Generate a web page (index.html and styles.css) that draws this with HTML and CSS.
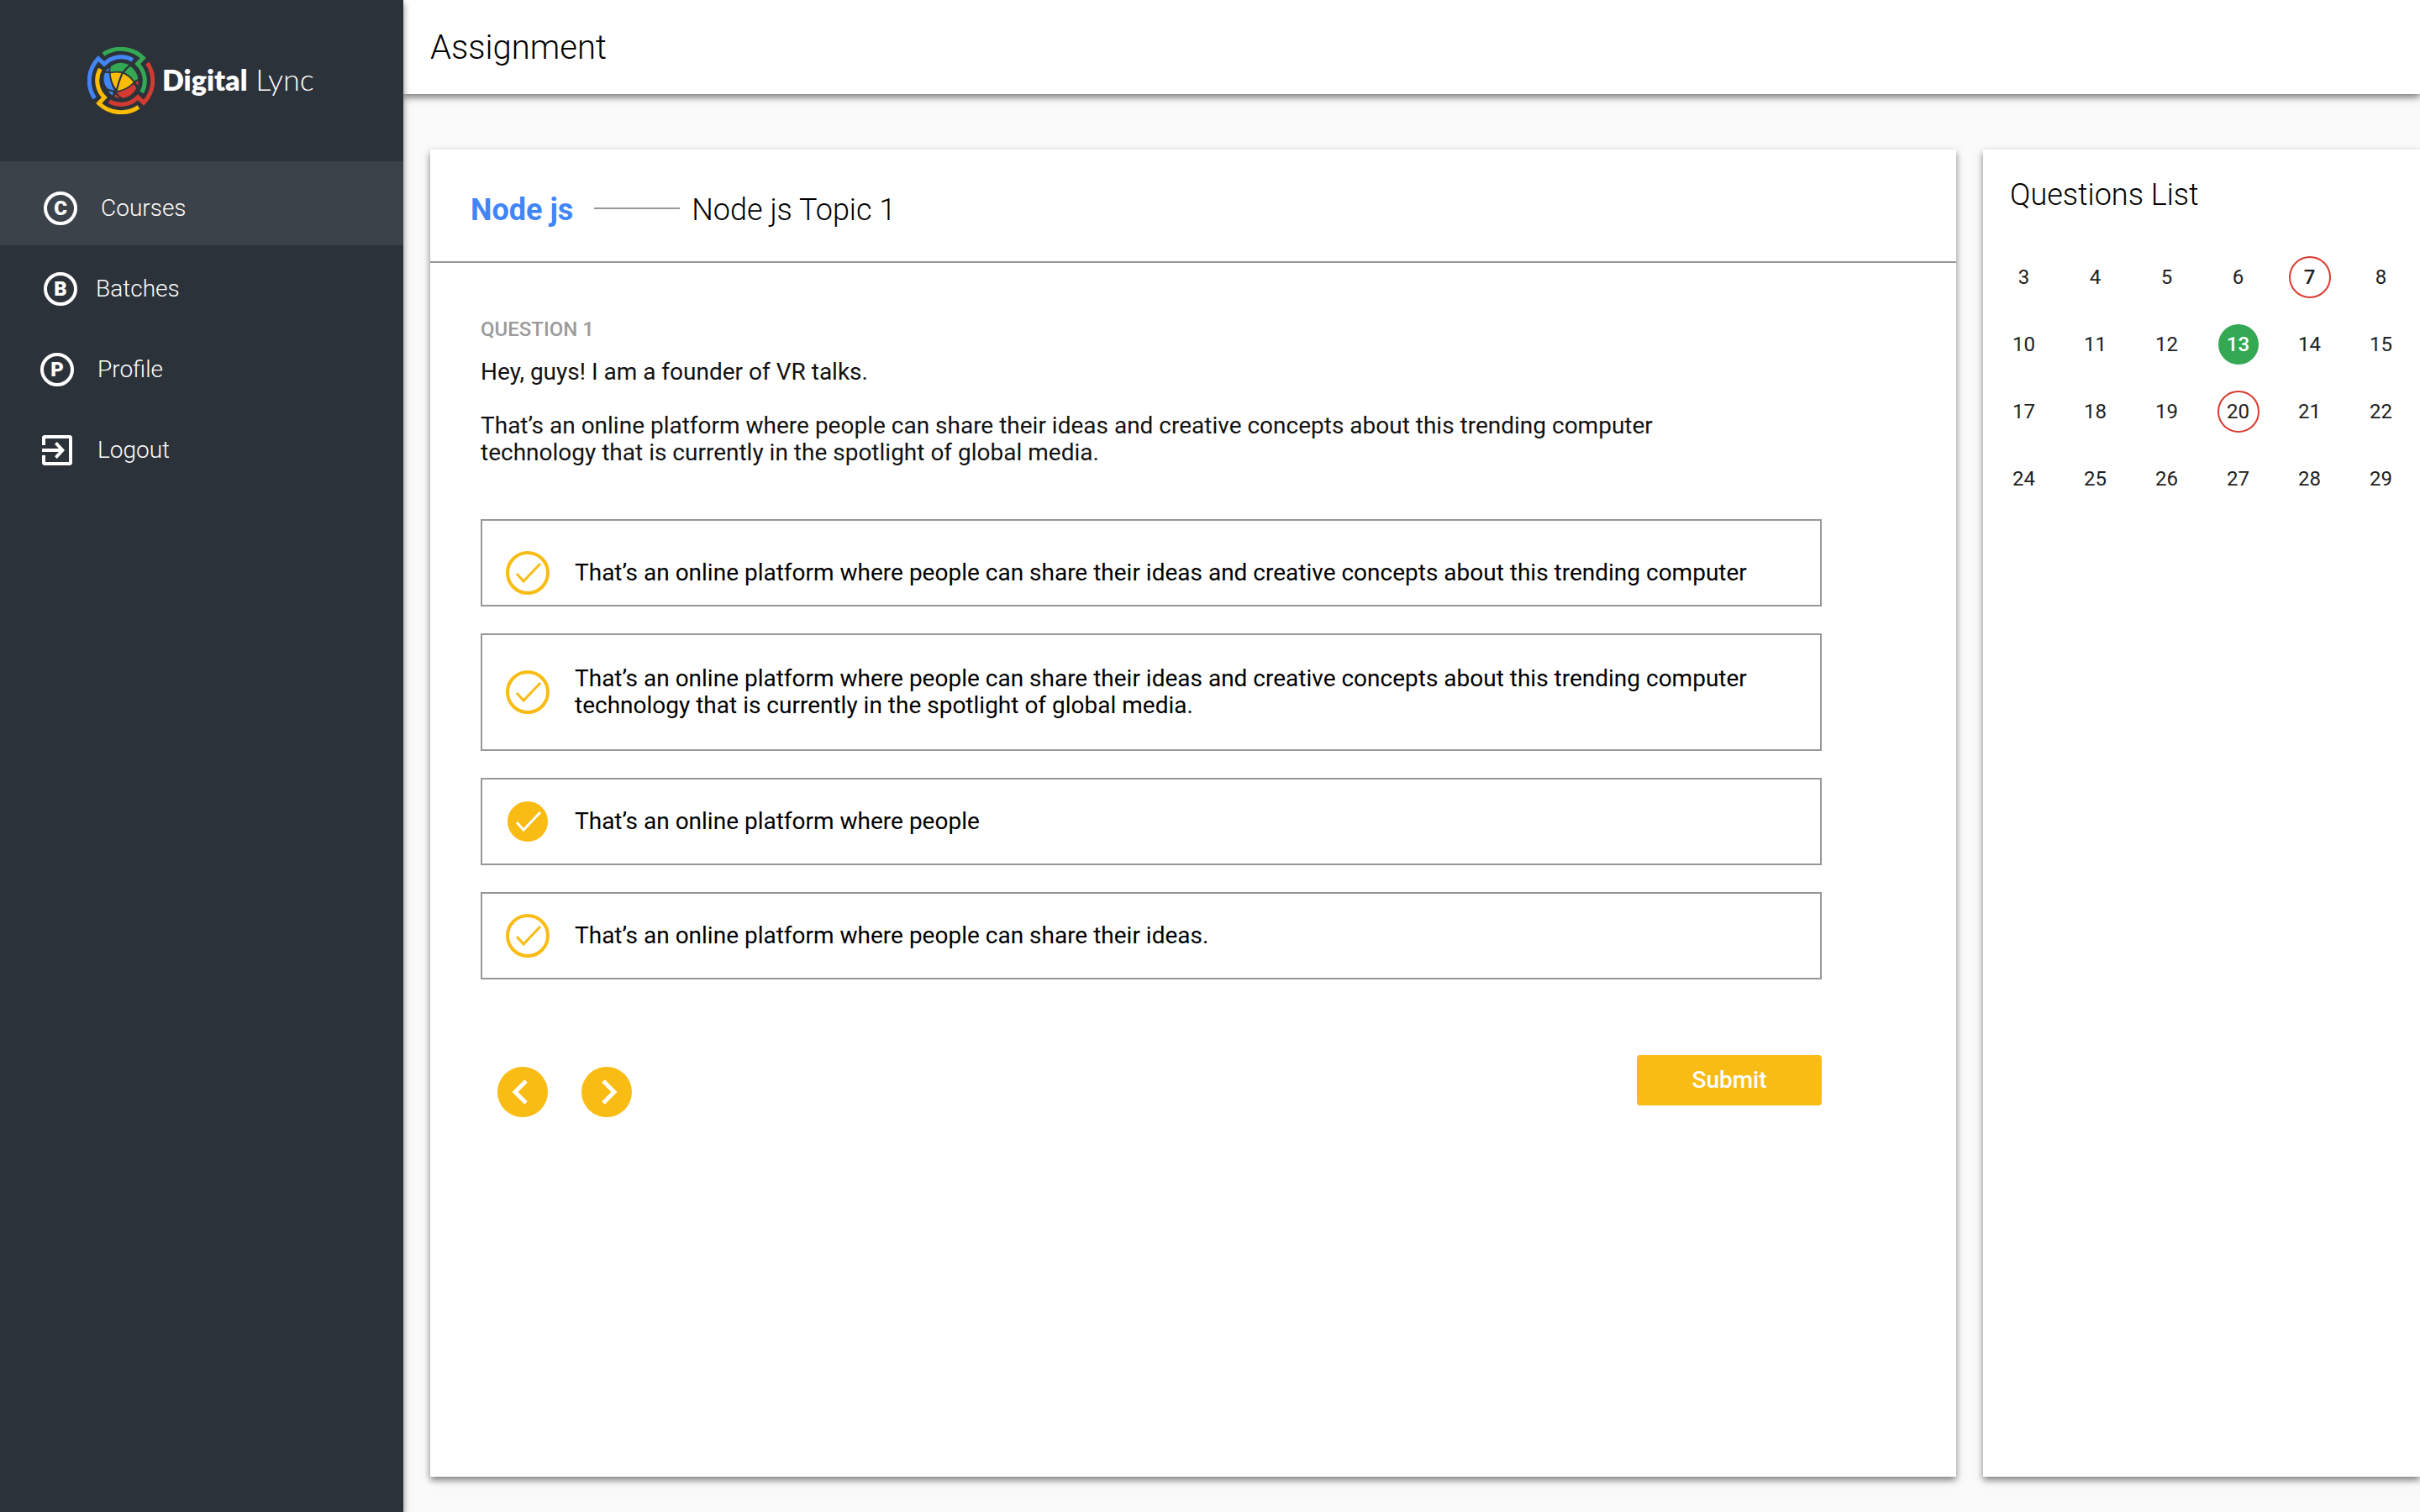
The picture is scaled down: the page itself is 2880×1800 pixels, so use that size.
FILE: index.html
```html
<!DOCTYPE html>
<html lang="en">
<head>
<meta charset="utf-8">
<title>Assignment – Digital Lync</title>
<link rel="stylesheet" href="styles.css">
</head>
<body>
<div class="app">
  <aside class="sidebar">
    <a class="brand" href="#">
      <svg class="brand-mark" viewBox="-120 -120 240 240" aria-hidden="true">
        <g fill="none" stroke-width="15">
          <path stroke="#34a853" d="M-63-94A113 113 0 0 1 79-81L59-60A84 84 0 0 1 74 42"/>
          <path stroke="#d33b30" transform="rotate(90)" d="M-63-94A113 113 0 0 1 79-81L59-60A84 84 0 0 1 74 42"/>
          <path stroke="#fbbc05" transform="rotate(180)" d="M-63-94A113 113 0 0 1 79-81L59-60A84 84 0 0 1 74 42"/>
          <path stroke="#4285f4" transform="rotate(270)" d="M-63-94A113 113 0 0 1 79-81L59-60A84 84 0 0 1 74 42"/>
        </g>
        <path fill="#34a853" d="M-36-51Q-4-74 29-56Q14-46 6-32Q-16-36-37-31Q-40-42-36-51Z"/>
        <path fill="#34a853" d="M12-29Q20-42 34-51Q57-34 61-6Q54-2 47 1Q34-18 12-29Z"/>
        <path fill="#4285f4" d="M-55-35L-43-46Q-44-40-43-34Z"/>
        <path fill="#4285f4" d="M-57-28L-42-26Q-40 8-24 35Q-38 34-49 28Q-70 0-57-28Z"/>
        <path fill="#4285f4" d="M-45 37L-27 41L-31 53Q-40 47-45 37Z"/>
        <path fill="#fbbc05" d="M-37-26Q-16-30 1-27Q-10 0-18 29Q-35 4-37-26Z"/>
        <path fill="#fbbc05" d="M7-25Q31-15 44 6Q20 30-13 36Q-5 4 7-25Z"/>
        <path fill="#d33b30" d="M-16 43Q22 34 44 13Q52 20 55 28Q40 56 8 63Q-8 56-16 43Z"/>
        <path fill="#d33b30" d="M52 6L62 1Q63 10 60 18Z"/>
        <path fill="#d33b30" d="M-20 49L-4 62Q-14 62-24 58Z"/>
      </svg>
      <span class="brand-name"><b>Digital</b> Lync</span>
    </a>
    <nav class="menu">
      <a class="menu-item active" href="#"><span class="badge">C</span><span class="menu-text">Courses</span></a>
      <a class="menu-item" href="#"><span class="badge">B</span><span class="menu-text">Batches</span></a>
      <a class="menu-item narrow" href="#"><span class="badge">P</span><span class="menu-text">Profile</span></a>
      <a class="menu-item narrow" href="#">
        <svg class="menu-icon" viewBox="1 1 20 20" aria-hidden="true"><path fill="#fff" d="M9.500 14.600 10.900 16l4.600-5-4.600-5-1.400 1.400L12 10H2v2h10zM18.500 2h-15C2.670 2 2 2.670 2 3.500V8h2V4h14v14H4v-4H2v4.500c0 .83.67 1.500 1.500 1.500h15c.83 0 1.500-.67 1.500-1.500v-15c0-.83-.67-1.500-1.500-1.500z"/></svg>
        <span class="menu-text">Logout</span>
      </a>
    </nav>
  </aside>

  <div class="content">
    <header class="topbar"><h1>Assignment</h1></header>
    <main class="panels">
      <section class="card quiz">
        <div class="quiz-head">
          <h2 class="course">Node js</h2>
          <span class="rule"></span>
          <span class="topic">Node js Topic 1</span>
        </div>
        <form class="quiz-body">
          <h3 class="label">QUESTION 1</h3>
          <div class="question" id="question">
            <p>Hey, guys! I am a founder of VR talks.</p>
            <p>That’s an online platform where people can share their ideas and creative concepts about this trending computer<br>technology that is currently in the spotlight of global media.</p>
          </div>
          <div class="options" role="radiogroup" aria-labelledby="question">
            <label class="option low"><input class="tick" type="radio" name="answer"><span>That’s an online platform where people can share their ideas and creative concepts about this trending computer</span></label>
            <label class="option tall"><input class="tick" type="radio" name="answer"><span>That’s an online platform where people can share their ideas and creative concepts about this trending computer<br>technology that is currently in the spotlight of global media.</span></label>
            <label class="option"><input class="tick" type="radio" name="answer" checked><span>That’s an online platform where people</span></label>
            <label class="option"><input class="tick" type="radio" name="answer"><span>That’s an online platform where people can share their ideas.</span></label>
          </div>
          <div class="actions">
            <div class="pager">
              <button class="round" type="button" aria-label="Previous question"><svg viewBox="0 0 60 60"><path d="M34 17 21 30l13 13"/></svg></button>
              <button class="round" type="button" aria-label="Next question"><svg viewBox="0 0 60 60"><path d="M26 17l13 13-13 13"/></svg></button>
            </div>
            <button class="submit" type="button">Submit</button>
          </div>
        </form>
      </section>

      <section class="card list">
        <h2>Questions List</h2>
        <div class="numbers">
          <button type="button">3</button><button type="button">4</button><button type="button">5</button><button type="button">6</button><button type="button" class="ring strong">7</button><button type="button">8</button>
          <button type="button">10</button><button type="button">11</button><button type="button">12</button><button type="button" class="done strong">13</button><button type="button">14</button><button type="button">15</button>
          <button type="button">17</button><button type="button">18</button><button type="button">19</button><button type="button" class="ring">20</button><button type="button">21</button><button type="button">22</button>
          <button type="button">24</button><button type="button">25</button><button type="button">26</button><button type="button">27</button><button type="button">28</button><button type="button">29</button>
        </div>
      </section>
    </main>
  </div>
</div>
</body>
</html>
```
FILE: styles.css
```css
:root {
  --dark: #2c323a;
  --dark-active: #3c4249;
  --amber: #f9bc15;
  --line: #979797;
  --shadow: 0 4px 8px rgba(0, 0, 0, .5);
}

* { box-sizing: border-box; }

body, h1, h2, h3, p { margin: 0; }

body {
  background: #fafafa;
  color: #000;
  font-family: Roboto, "Liberation Sans", sans-serif;
  font-size: 28px;
  line-height: 32px;
}

button { font: inherit; border: 0; padding: 0; cursor: pointer; }
a { color: inherit; text-decoration: none; }

.app { display: flex; min-height: 100vh; }

/* Sidebar */
.sidebar {
  flex: none;
  width: 480px;
  background: var(--dark);
  color: #fff;
  box-shadow: var(--shadow);
  z-index: 2;
}

.brand {
  display: flex;
  align-items: center;
  gap: 9px;
  height: 192px;
  padding-left: 104px;
}

.brand-mark { width: 80px; height: 80px; }

.brand-name {
  padding-bottom: 4px;
  font-family: Lato, "Liberation Sans", sans-serif;
  font-size: 36px;
  font-weight: 300;
  line-height: 40px;
  white-space: nowrap;
}

.brand-name b { font-size: 34px; font-weight: 800; }

.menu { display: flex; flex-direction: column; }

.menu-item {
  display: flex;
  align-items: center;
  height: 96px;
  padding-left: 52px;
  gap: 22px;
  font-weight: 300;
}

.menu-item.active {
  height: 100px;
  margin-bottom: 4px;
  padding-top: 12px;
  gap: 28px;
  background: var(--dark-active);
}

.menu-item.narrow { padding-left: 48px; gap: 28px; }

.badge {
  display: flex;
  align-items: center;
  justify-content: center;
  width: 40px;
  height: 40px;
  border: 4px solid #fff;
  border-radius: 50%;
  font-size: 24px;
  font-weight: 900;
}

.menu-icon { width: 40px; height: 40px; }

/* Header */
.content { flex: 1; min-width: 0; display: flex; flex-direction: column; }

.topbar {
  display: flex;
  align-items: center;
  height: 112px;
  padding: 2px 32px 0;
  background: #fff;
  box-shadow: var(--shadow);
}

h1 { font-size: 40px; font-weight: 300; line-height: 48px; }

/* Cards */
.panels {
  flex: 1;
  display: flex;
  gap: 32px;
  padding: 66px 0 42px 32px;
}

.card { background: #fff; box-shadow: var(--shadow); }
.quiz { flex: 1; min-width: 0; }
.list { flex: none; width: 520px; }

.quiz-head {
  display: flex;
  align-items: center;
  height: 135px;
  padding: 8px 48px 0;
  border-bottom: 2px solid var(--line);
  font-size: 36px;
  line-height: 40px;
}

.course, .topic { padding-top: 2px; }
.course { font-size: 36px; font-weight: 700; color: #4285f4; }
.rule { width: 102px; height: 2px; margin: 0 14px 2px 25px; background: var(--line); }
.topic { font-weight: 300; }

.quiz-body { padding: 63px 160px 64px 60px; }

.label { font-size: 24px; font-weight: 500; line-height: 32px; color: #9b9b9b; }

.question {
  display: grid;
  gap: 32px;
  margin: 19px 0 63px;
  color: #111;
}

.options { display: grid; gap: 32px; }

.option {
  display: flex;
  align-items: center;
  gap: 30px;
  min-height: 104px;
  padding: 0 28px;
  border: 2px solid var(--line);
}

.option.low { padding-top: 24px; }
.option.tall { min-height: 140px; }

.tick {
  appearance: none;
  flex: none;
  width: 52px;
  height: 52px;
  margin: 0;
  border: 4px solid var(--amber);
  border-radius: 50%;
  background: url("data:image/svg+xml,%3Csvg xmlns='http://www.w3.org/2000/svg' viewBox='0 0 44 44'%3E%3Cpath d='M9 23l8 9L37 11' fill='none' stroke='%23f9bc15' stroke-width='3'/%3E%3C/svg%3E") center / 44px no-repeat;
}

.tick:checked {
  width: 48px;
  height: 48px;
  margin: 0 2px;
  border-width: 2px;
  background-color: var(--amber);
  background-image: url("data:image/svg+xml,%3Csvg xmlns='http://www.w3.org/2000/svg' viewBox='0 0 44 44'%3E%3Cpath d='M9 23l8 9L37 11' fill='none' stroke='%23fff' stroke-width='3'/%3E%3C/svg%3E");
}

.actions {
  display: flex;
  justify-content: space-between;
  align-items: flex-start;
  margin-top: 90px;
}

.pager { display: flex; gap: 40px; padding: 14px 0 0 20px; }

.round { width: 60px; height: 60px; border-radius: 50%; background: var(--amber); }
.round svg { display: block; width: 60px; height: 60px; fill: none; stroke: #fff; stroke-width: 5; }

.submit {
  width: 220px;
  height: 60px;
  border-radius: 4px;
  background: var(--amber);
  color: #fff;
  font-weight: 500;
}

/* Questions list */
.list h2 { padding: 34px 32px 0; font-size: 36px; font-weight: 300; line-height: 40px; }

.numbers {
  display: grid;
  grid-template-columns: repeat(6, 1fr);
  grid-auto-rows: 80px;
  align-items: center;
  justify-items: center;
  padding: 38px 4px 0 6px;
}

.numbers button {
  width: 50px;
  height: 50px;
  border-radius: 50%;
  background: none;
  color: #212121;
  font-size: 24px;
}

.numbers .strong { font-weight: 500; }
.numbers .ring { border: 2px solid #d93a30; }
.numbers .done { width: 48px; height: 48px; background: #34a853; color: #fff; }
```
